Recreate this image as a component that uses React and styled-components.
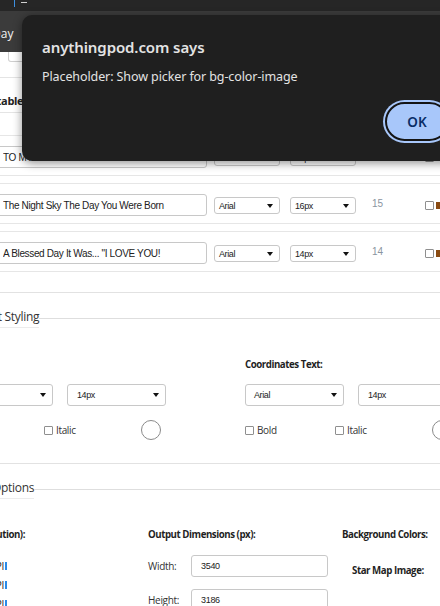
import React from 'react';
import styled, { createGlobalStyle } from 'styled-components';

const Global = createGlobalStyle`
  html, body { margin: 0; padding: 0; background: #fff; overflow: hidden; }
  body { font-family: "Open Sans", "Noto Sans", sans-serif; color: #222; }
  * { box-sizing: border-box; }
`;

const Stage = styled.div`
  position: relative;
  width: 440px;
  height: 606px;
  overflow: hidden;
  background: #fff;
`;

const TopStrip = styled.div`
  height: 11px;
  background: #262626;
  display: flex;
  align-items: flex-start;
  gap: 6px;
  padding-left: 14px;
`;

const StripMark = styled.span`
  display: block;
  width: ${p => p.$w}px;
  height: ${p => p.$h}px;
  margin-top: ${p => p.$t}px;
  background: ${p => p.$c};
`;

const NavBar = styled.div`
  height: 41px;
  background: #3b3b3b;
  display: flex;
  align-items: center;
  overflow: hidden;
`;

const NavLink = styled.span`
  margin-left: -8px;
  padding-top: 3px;
  color: #f2f2f2;
  font-size: 12px;
  white-space: nowrap;
`;

const SearchBox = styled.div`
  margin-left: 8px;
  width: 200px;
  height: 10px;
  border: 1px solid #cfcfcf;
  border-top: none;
  border-radius: 0 0 3px 3px;
`;

const TableHead = styled.div`
  margin-top: 15px;
  height: 36px;
  border-top: 1px solid #e4e4e4;
  border-bottom: 1px solid #e4e4e4;
  display: flex;
  align-items: flex-end;
  padding-bottom: 4px;
`;

const HeadCell = styled.span`
  margin-left: ${p => p.$ml}px;
  font-size: 11px;
  font-weight: 700;
  letter-spacing: -0.3px;
  white-space: nowrap;
  color: #222;
`;

const RowList = styled.div`
  padding-top: 22px;
  display: flex;
  flex-direction: column;
  gap: 7px;
`;

const Row = styled.div`
  height: 41px;
  border-top: 1px solid #e6e6e6;
  border-bottom: 1px solid #e6e6e6;
  padding-top: 10px;
  display: flex;
  align-items: flex-start;
  & > * { flex-shrink: 0; }
`;

const TextField = styled.input`
  width: ${p => p.$w}px;
  height: 22px;
  margin-left: ${p => p.$ml || 0}px;
  padding: 0 5px;
  border: 1px solid #c8c8c8;
  border-radius: 3px;
  font-family: "Liberation Sans", Arial, sans-serif;
  font-size: 10px;
  letter-spacing: -0.35px;
  color: #222;
  background: #fff;
  outline: none;
`;

const SelectBox = styled.div`
  width: ${p => p.$w}px;
  height: ${p => p.$h}px;
  margin-left: ${p => p.$ml || 0}px;
  margin-top: ${p => p.$mt || 0}px;
  border: 1px solid #c8c8c8;
  border-radius: 3px;
  background: #fff;
  display: flex;
  align-items: center;
  justify-content: space-between;
  padding: 0 ${p => p.$pr}px 0 ${p => p.$pl}px;
  flex-shrink: 0;
`;

const SelectValue = styled.span`
  font-family: "Liberation Sans", Arial, sans-serif;
  font-size: 9px;
  letter-spacing: -0.4px;
  color: #222;
`;

const Caret = styled.span`
  width: 0;
  height: 0;
  border-left: 3.5px solid transparent;
  border-right: 3.5px solid transparent;
  border-top: 4px solid #111;
`;

const Select = ({ w, h, ml, mt, pl, pr, children }) => (
  <SelectBox $w={w} $h={h} $ml={ml} $mt={mt} $pl={pl} $pr={pr}>
    <SelectValue>{children}</SelectValue>
    <Caret />
  </SelectBox>
);

const SizeNum = styled.span`
  margin-left: 16px;
  margin-top: 4px;
  width: 53px;
  font-family: "Liberation Sans", Arial, sans-serif;
  font-size: 10px;
  color: #8a94a0;
`;

const Check = styled.span`
  display: inline-block;
  width: 9px;
  height: 9px;
  border: 1px solid #8f8f8f;
  border-radius: 1px;
  background: #fff;
  flex-shrink: 0;
`;

const RowChecks = styled.div`
  margin-top: 7px;
  display: flex;
  align-items: center;
  gap: 2px;
`;

const BrownMark = styled.span`
  width: 4px;
  height: 7px;
  background: #8a4b12;
`;

const Divider = styled.div`
  margin-top: ${p => p.$mt}px;
  height: 1px;
  background: #e2e2e2;
`;

const SectionHead = styled.div`
  margin-top: 15px;
  height: 20px;
  display: flex;
  align-items: center;
`;

const SectionTitle = styled.span`
  margin-left: ${p => p.$ml}px;
  height: 20px;
  line-height: 18px;
  border-bottom: 1px solid #ececec;
  font-size: 12px;
  letter-spacing: -0.3px;
  color: #333;
  white-space: nowrap;
`;

const SectionRule = styled.span`
  flex: 1;
  height: 1px;
  background: #dedede;
`;

const StyleGrid = styled.div`
  margin-left: -46px;
  margin-top: 29px;
  display: grid;
  grid-template-columns: 291px 291px;
`;

const StyleCol = styled.div`
  display: flex;
  flex-direction: column;
`;

const FieldLabel = styled.div`
  height: 16px;
  line-height: 16px;
  font-size: 9.7px;
  font-weight: 700;
  letter-spacing: -0.45px;
  color: #1f1f1f;
  white-space: nowrap;
`;

const SelectRow = styled.div`
  margin-top: 11px;
  display: flex;
  gap: 14px;
`;

const ChecksRow = styled.div`
  margin-top: 14px;
  height: 20px;
  display: grid;
  grid-template-columns: 90px 97px 20px;
  align-items: center;
`;

const CheckLabel = styled.label`
  display: flex;
  align-items: center;
  gap: 3px;
  font-size: 10px;
  letter-spacing: -0.35px;
  color: #333;
`;

const ColorDot = styled.span`
  width: 20px;
  height: 20px;
  border-radius: 50%;
  border: 1px solid #8a8a8a;
  background: #fff;
`;

const OutputRow = styled.div`
  margin-top: 28px;
  display: flex;
  align-items: flex-start;
`;

const LeftCol = styled.div`
  margin-left: -120px;
  width: 145px;
  display: flex;
  flex-direction: column;
  align-items: flex-end;
  flex-shrink: 0;
`;

const DpiList = styled.div`
  margin-top: 16px;
  display: flex;
  flex-direction: column;
  gap: 5px;
  padding-right: 18px;
  align-items: flex-end;
`;

const DpiItem = styled.div`
  height: 14px;
  display: flex;
  align-items: center;
  font-size: 10px;
  letter-spacing: -0.3px;
  color: #222;
  white-space: nowrap;
`;

const Caret2 = styled.span`
  width: 2px;
  height: 8px;
  margin-left: 1px;
  background: #2a8be8;
`;

const MidCol = styled.div`
  margin-left: 123px;
  width: 194px;
  display: flex;
  flex-direction: column;
  flex-shrink: 0;
`;

const DimRow = styled.div`
  margin-top: ${p => p.$mt}px;
  display: flex;
  align-items: center;
`;

const DimLabel = styled.span`
  width: 43px;
  font-size: 10px;
  letter-spacing: -0.3px;
  color: #333;
`;

const DimInput = styled.input`
  width: 137px;
  height: 22px;
  padding: 0 9px;
  border: 1px solid #c8c8c8;
  border-radius: 3px;
  font-family: "Liberation Sans", Arial, sans-serif;
  font-size: 9px;
  letter-spacing: -0.3px;
  color: #222;
  outline: none;
`;

const RightCol = styled.div`
  display: flex;
  flex-direction: column;
`;

const SubLabel = styled.div`
  margin-top: 21px;
  margin-left: 10px;
  font-size: 9.7px;
  font-weight: 700;
  letter-spacing: -0.45px;
  color: #1f1f1f;
  white-space: nowrap;
`;

/* ---------- Dialog ---------- */

const Dialog = styled.div`
  position: absolute;
  left: 22px;
  top: 15px;
  width: 460px;
  height: 146px;
  background: #1f1f1f;
  border-radius: 10px;
  box-shadow: 0 2px 10px rgba(0, 0, 0, 0.45);
  padding: 22px 33px 0 20px;
  display: flex;
  flex-direction: column;
  font-family: "Noto Sans", "Open Sans", sans-serif;
`;

const DialogTitle = styled.div`
  height: 20px;
  line-height: 20px;
  font-size: 15px;
  font-weight: 600;
  color: #e3e3e3;
  letter-spacing: -0.1px;
`;

const DialogMsg = styled.div`
  margin-top: 11px;
  line-height: 18px;
  font-size: 12.5px;
  color: #e3e3e3;
  letter-spacing: -0.1px;
`;

const DialogActions = styled.div`
  margin-top: 16px;
  display: flex;
  justify-content: flex-end;
`;

const OkButton = styled.button`
  width: 64px;
  height: 39px;
  border-radius: 20px;
  background: #a8c7fa;
  border: 2px solid #141414;
  box-shadow: 0 0 0 2px #a8c7fa;
  color: #0a2d66;
  font-family: "Noto Sans", "Open Sans", sans-serif;
  font-size: 13.5px;
  font-weight: 600;
  padding: 0;
`;

const rows = [
  { text: 'TO MY WIFE', font: 'Arial', size: '18px', n: '18' },
  { text: 'The Night Sky The Day You Were Born', font: 'Arial', size: '16px', n: '15' },
  { text: 'A Blessed Day It Was... "I LOVE YOU!', font: 'Arial', size: '14px', n: '14' },
];

const styleCols = [
  { label: 'Title Text:' },
  { label: 'Coordinates Text:' },
];

export default function App() {
  return (
    <Stage>
      <Global />
      <TopStrip>
        <StripMark $w={1} $h={7} $t={0} $c="#3d8fe0" />
        <StripMark $w={6} $h={1} $t={2} $c="#d0d0d0" />
      </TopStrip>
      <NavBar>
        <NavLink>Day</NavLink>
      </NavBar>
      <SearchBox />

      <TableHead>
        <HeadCell $ml={-19}>Editable</HeadCell>
      </TableHead>

      <RowList>
        {rows.map((r, i) => (
          <Row key={i}>
            <TextField $w={210} $ml={-3} defaultValue={r.text} readOnly />
            <Select w={66} h={17} ml={7} mt={3} pl={4} pr={6}>{r.font}</Select>
            <Select w={66} h={17} ml={10} mt={3} pl={4} pr={6}>{r.size}</Select>
            <SizeNum>{r.n}</SizeNum>
            <RowChecks>
              <Check />
              <BrownMark />
            </RowChecks>
          </Row>
        ))}
      </RowList>

      <Divider $mt={20} />
      <SectionHead>
        <SectionTitle $ml={-21}>Text Styling</SectionTitle>
        <SectionRule />
      </SectionHead>

      <StyleGrid>
        {styleCols.map((c, i) => (
          <StyleCol key={i}>
            <FieldLabel>{c.label}</FieldLabel>
            <SelectRow>
              <Select w={99} h={22} pl={8} pr={6}>Arial</Select>
              <Select w={99} h={22} pl={9} pr={6}>14px</Select>
            </SelectRow>
            <ChecksRow>
              <CheckLabel><Check />Bold</CheckLabel>
              <CheckLabel><Check />Italic</CheckLabel>
              <ColorDot />
            </ChecksRow>
          </StyleCol>
        ))}
      </StyleGrid>

      <Divider $mt={23} />
      <SectionHead>
        <SectionTitle $ml={-49}>Output Options</SectionTitle>
        <SectionRule />
      </SectionHead>

      <OutputRow>
        <LeftCol>
          <FieldLabel>Print DPI (Resolution):</FieldLabel>
          <DpiList>
            <DpiItem>150 DPI<Caret2 /></DpiItem>
            <DpiItem>300 DPI<Caret2 /></DpiItem>
            <DpiItem>600 DPI<Caret2 /></DpiItem>
          </DpiList>
        </LeftCol>
        <MidCol>
          <FieldLabel>Output Dimensions (px):</FieldLabel>
          <DimRow $mt={12}>
            <DimLabel>Width:</DimLabel>
            <DimInput defaultValue="3540" readOnly />
          </DimRow>
          <DimRow $mt={12}>
            <DimLabel>Height:</DimLabel>
            <DimInput defaultValue="3186" readOnly />
          </DimRow>
        </MidCol>
        <RightCol>
          <FieldLabel>Background Colors:</FieldLabel>
          <SubLabel>Star Map Image:</SubLabel>
        </RightCol>
      </OutputRow>

      <Dialog role="alertdialog">
        <DialogTitle>anythingpod.com says</DialogTitle>
        <DialogMsg>Placeholder: Show picker for bg-color-image</DialogMsg>
        <DialogActions>
          <OkButton>OK</OkButton>
        </DialogActions>
      </Dialog>
    </Stage>
  );
}
